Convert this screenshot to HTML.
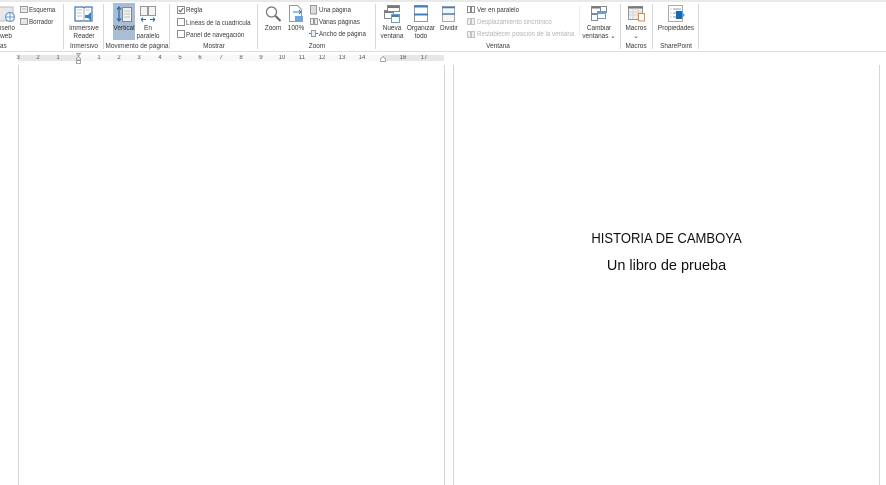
<!DOCTYPE html>
<html lang="es"><head><meta charset="utf-8"><title>Vista</title>
<style>
html,body{margin:0;padding:0;width:886px;height:485px;overflow:hidden;background:#fff}
body{position:relative;font-family:"Liberation Sans",sans-serif;color:#3c3c3c}
.t,.c{position:absolute;line-height:9px;white-space:nowrap;filter:blur(.25px);font-size:7px}
.t{margin-top:.5px;transform:scaleX(.893);transform-origin:0 0}
.c{text-align:center;transform:translateX(-50%) scaleX(.92)}
.g{color:#b4b4b4}
.s{position:absolute;top:4px;width:1px;height:45px;background:#d8d8d8}
.r{position:absolute;top:54.500px;font-size:6px;line-height:6px;color:#555;transform:translateX(-50%);filter:blur(.25px)}
.l{position:absolute;width:1px;background:#d6d6d6}
svg{position:absolute;overflow:visible;filter:blur(.3px)}
.cb{position:absolute;left:177px;width:6px;height:6px;border:1px solid #8c8c8c;background:#fff}
.h{position:absolute;left:454px;width:425px;text-align:center;color:#111;line-height:17px;white-space:nowrap;font-size:14.500px}
.h span{display:inline-block}
</style></head><body>
<div style="position:absolute;left:0;top:0;width:886px;height:2px;background:#e9e9e9"></div>
<div style="position:absolute;left:0;top:51px;width:886px;height:1px;background:#dcdcdc"></div>

<div class="s" style="left:63px"></div><div class="s" style="left:103px"></div><div class="s" style="left:169px"></div>
<div class="s" style="left:257px"></div><div class="s" style="left:375px"></div><div class="s" style="left:620px"></div>
<div class="s" style="left:652px"></div><div class="s" style="left:698px"></div>
<div class="s" style="left:579px;top:6px;height:30px;background:#ececec"></div>

<!-- Diseño web -->
<svg style="left:0;top:6px" width="16" height="17"><rect x="-4" y="1" width="17" height="14" fill="#e8e8e8" stroke="#bbb"/><circle cx="10" cy="11" r="4.500" fill="#fff" stroke="#6d9bcd" stroke-width="1.200"/><path d="M10 6.500v9M5.500 11h9" stroke="#6d9bcd"/></svg>
<div class="t" style="left:0;top:23.500px">iseño</div><div class="c" style="left:6px;top:32px">web</div>
<div class="t" style="left:0;top:41.500px">as</div>
<svg style="left:20px;top:6px" width="8" height="8"><rect x=".5" y=".5" width="7" height="6" fill="#eee" stroke="#999"/><path d="M2 3h4" stroke="#bbb"/></svg>
<div class="t" style="left:29px;top:5px">Esquema</div>
<svg style="left:20px;top:18px" width="8" height="8"><rect x=".5" y=".5" width="7" height="6" fill="#e6e6e6" stroke="#999"/></svg>
<div class="t" style="left:29px;top:17px">Borrador</div>

<!-- Immersive -->
<svg style="left:74px;top:6px" width="20" height="17"><path d="M1 1h8l1 1 1-1h7v14h-17z" fill="#fff" stroke="#3d78b2" stroke-width="1.200"/><path d="M10 2v13" stroke="#aaa"/><path d="M3 4h5M3 7h5M3 10h5M12 4h4" stroke="#c6c6c6"/><path d="M11 9h3l3-3v9l-3-3h-3z" fill="#3a80c4"/></svg>
<div class="c" style="left:84px;top:24px">Immersive</div><div class="c" style="left:84px;top:32px">Reader</div>
<div class="c" style="left:84px;top:42px">Inmersivo</div>

<!-- Vertical -->
<div style="position:absolute;left:113px;top:3px;width:22px;height:37px;background:#a9bdd4"></div>
<svg style="left:115px;top:6px" width="18" height="17"><path d="M4 1v14M2 3.500l2-2.500 2 2.500M2 12.500l2 2.500 2-2.500" fill="none" stroke="#2b6cb0" stroke-width="1.300"/><rect x="7.500" y="1.500" width="9" height="14" fill="#eef1f4" stroke="#888"/><path d="M9 5h6M9 8h6M9 11h6" stroke="#c4c4c4"/></svg>
<div class="c" style="left:124px;top:24px;color:#2c2c2c">Vertical</div>
<svg style="left:140px;top:6px" width="16" height="16"><rect x=".5" y=".5" width="7" height="9" fill="#f3f3f3" stroke="#999"/><rect x="8.500" y=".5" width="7" height="9" fill="#f3f3f3" stroke="#999"/><path d="M1 13.500h5M1 13.500l2-2M1 13.500l2 2M15 13.500h-5M15 13.500l-2-2M15 13.500l-2 2" fill="none" stroke="#2b6cb0"/></svg>
<div class="c" style="left:148px;top:24px">En</div><div class="c" style="left:148px;top:32px">paralelo</div>
<div class="c" style="left:137px;top:42px">Movimiento de página</div>

<!-- Mostrar -->
<div class="cb" style="top:6px"></div>
<svg style="left:178px;top:7px" width="6" height="6"><path d="M.8 3l1.500 1.700 3-3.800" fill="none" stroke="#555"/></svg>
<div class="t" style="left:186px;top:5.500px">Regla</div>
<div class="cb" style="top:18px"></div><div class="t" style="left:186px;top:18px">Líneas de la cuadrícula</div>
<div class="cb" style="top:30px"></div><div class="t" style="left:186px;top:30px">Panel de navegación</div>
<div class="c" style="left:214px;top:42px">Mostrar</div>

<!-- Zoom -->
<svg style="left:265px;top:6px" width="16" height="16"><circle cx="6.500" cy="6" r="5" fill="#fff" stroke="#777" stroke-width="1.200"/><path d="M10.500 10l5 5" stroke="#666" stroke-width="2"/></svg>
<div class="c" style="left:273px;top:24px">Zoom</div>
<svg style="left:289px;top:5px" width="15" height="18"><path d="M.5.500h8l4 4v12h-12z" fill="#fff" stroke="#999"/><path d="M4 7h8M10 5l2 2-2 2" fill="none" stroke="#3a80c4"/><rect x="6" y="11" width="8" height="6" fill="#6ea6da"/></svg>
<div class="c" style="left:296px;top:24px">100%</div>
<svg style="left:310px;top:5px" width="7" height="9"><rect x=".5" y=".5" width="6" height="8.500" fill="#ddd" stroke="#999"/></svg>
<div class="t" style="left:319px;top:5px">Una página</div>
<svg style="left:310px;top:18px" width="8" height="7"><path d="M.5.500h3v6h-3zM4.500.500h3v6h-3z" fill="#eee" stroke="#999"/></svg>
<div class="t" style="left:319px;top:17px">Varias páginas</div>
<svg style="left:309px;top:30px" width="9" height="7"><rect x="2.500" y=".5" width="4" height="6" fill="#eee" stroke="#999"/><path d="M0 3.500h2M7 3.500h2" stroke="#3a80c4"/></svg>
<div class="t" style="left:319px;top:29.500px">Ancho de página</div>
<div class="c" style="left:317px;top:42px">Zoom</div>

<!-- Ventana -->
<svg style="left:384px;top:5px" width="16" height="18"><rect x=".5" y="5.500" width="9" height="8" fill="#fff" stroke="#888"/><path d="M1 7h8" stroke="#777" stroke-width="2"/><rect x="3.500" y=".5" width="12" height="6" fill="#fff" stroke="#888"/><path d="M4 2h11" stroke="#777" stroke-width="2"/><rect x="7.500" y="9.500" width="8" height="8" fill="#fff" stroke="#6d9bcd"/><path d="M8 11h7" stroke="#3a80c4" stroke-width="2"/></svg>
<div class="c" style="left:392px;top:24px">Nueva</div><div class="c" style="left:392px;top:32px">ventana</div>
<svg style="left:414px;top:5px" width="14" height="17"><rect x=".5" y=".5" width="13" height="16" fill="#fff" stroke="#999"/><path d="M0 1.500h14M0 9.500h14" stroke="#3a80c4" stroke-width="2"/></svg>
<div class="c" style="left:421px;top:24px">Organizar</div><div class="c" style="left:421px;top:32px">todo</div>
<svg style="left:442px;top:6px" width="13" height="16"><rect x=".5" y=".5" width="12" height="15" fill="#f6f6f6" stroke="#aaa"/><path d="M0 1.500h13M0 8h13" stroke="#3a80c4" stroke-width="1.500"/></svg>
<div class="c" style="left:449px;top:24px">Dividir</div>
<svg style="left:467px;top:6px" width="8" height="7"><path d="M.5.500h3v6h-3zM4.500.500h3v6h-3z" fill="#fff" stroke="#888"/></svg>
<div class="t" style="left:477px;top:5px">Ver en paralelo</div>
<svg style="left:467px;top:18px" width="8" height="7"><path d="M.5.500h3v6h-3zM4.500.500h3v6h-3z" fill="#f0f0f0" stroke="#c4c4c4"/></svg>
<div class="t g" style="left:477px;top:17px">Desplazamiento sincrónico</div>
<svg style="left:467px;top:31px" width="8" height="7"><path d="M.5.500h3v6h-3zM4.500.500h3v6h-3z" fill="#f0f0f0" stroke="#c4c4c4"/></svg>
<div class="t g" style="left:477px;top:29.500px">Restablecer posición de la ventana</div>
<div class="c" style="left:498px;top:42px">Ventana</div>
<svg style="left:591px;top:6px" width="16" height="15"><rect x=".5" y=".5" width="9" height="7" fill="#fff" stroke="#888"/><path d="M1 1.500h8" stroke="#777" stroke-width="2"/><rect x="9.500" y=".5" width="6" height="6" fill="#fff" stroke="#888"/><rect x=".5" y="8.500" width="6" height="6" fill="#fff" stroke="#888"/><rect x="6.500" y="5.500" width="8" height="7" fill="#fff" stroke="#6d9bcd"/><path d="M7 7h7" stroke="#3a80c4" stroke-width="1.500"/></svg>
<div class="c" style="left:599px;top:24px">Cambiar</div><div class="c" style="left:599px;top:32px">ventanas ⌄</div>

<!-- Macros -->
<svg style="left:628px;top:6px" width="18" height="16"><rect x=".5" y=".5" width="14" height="13" fill="#eee" stroke="#999"/><path d="M0 1.500h15" stroke="#777" stroke-width="2"/><path d="M1 6h13M1 9h13M5 3v10M10 3v10" stroke="#d4d4d4"/><rect x="10.500" y="7.500" width="6" height="7.500" fill="#fff" stroke="#e8873a"/></svg>
<div class="c" style="left:636px;top:24px">Macros</div><div class="c" style="left:636px;top:32px">⌄</div>
<div class="c" style="left:636px;top:42px">Macros</div>

<!-- SharePoint -->
<svg style="left:668px;top:5px" width="17" height="18"><rect x=".5" y=".5" width="14" height="16" fill="#fff" stroke="#aaa"/><path d="M2.500 4h1M2.500 8h1M2.500 12h1M5 4h8M5 8h3M5 12h3" stroke="#999"/><rect x="8" y="6" width="6" height="8" fill="#0f6cbd"/><path d="M14 7l3 3-3 3z" fill="#49a5e6"/></svg>
<div class="c" style="left:676px;top:24px">Propiedades</div>
<div class="c" style="left:676px;top:42px">SharePoint</div>

<!-- Regla -->
<div style="position:absolute;left:18px;top:55px;width:60px;height:6px;background:#e6e6e6"></div>
<div style="position:absolute;left:78px;top:55px;width:305px;height:6px;background:#f8f8f8"></div>
<div style="position:absolute;left:383px;top:55px;width:61px;height:6px;background:#e6e6e6"></div>
<div class="r" style="left:18px">3</div><div class="r" style="left:38px">2</div><div class="r" style="left:58px">1</div>
<div class="r" style="left:99px">1</div><div class="r" style="left:119px">2</div><div class="r" style="left:139px">3</div><div class="r" style="left:160px">4</div>
<div class="r" style="left:180px">5</div><div class="r" style="left:200px">6</div><div class="r" style="left:221px">7</div><div class="r" style="left:241px">8</div>
<div class="r" style="left:261px">9</div><div class="r" style="left:282px">10</div><div class="r" style="left:302px">11</div><div class="r" style="left:322px">12</div>
<div class="r" style="left:342px">13</div><div class="r" style="left:362px">14</div><div class="r" style="left:403px">16</div><div class="r" style="left:424px">17</div>
<svg style="left:76px;top:53px" width="6" height="11"><path d="M.5.500h4l-2 2.500zM2.500 3.500l2 2v1.500h-4v-1.500zM.5 7.500h4v3h-4z" fill="#fff" stroke="#888" stroke-width=".7"/></svg>
<svg style="left:380px;top:56px" width="6" height="6"><path d="M3 .5l2.500 2.500v2.500h-5v-2.500z" fill="#fff" stroke="#888" stroke-width=".7"/></svg>

<!-- Páginas -->
<div class="l" style="left:18px;top:65px;height:420px"></div>
<div class="l" style="left:444px;top:65px;height:420px"></div>
<div class="l" style="left:453px;top:65px;height:420px"></div>
<div class="l" style="left:879px;top:65px;height:420px"></div>
<div class="h" style="top:231px"><span style="transform:scaleX(.9)">HISTORIA DE CAMBOYA</span></div>
<div class="h" style="top:258px"><span>Un libro de prueba</span></div>
</body></html>
